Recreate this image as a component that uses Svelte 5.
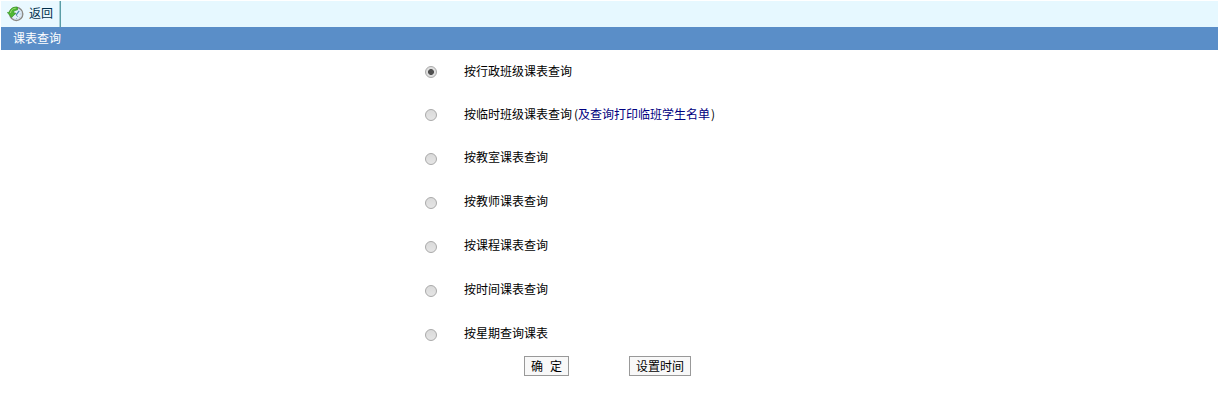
<script>
  const options = [
    { id: 'class', label: '按行政班级课表查询' },
    { id: 'temp', label: '按临时班级课表查询', link: '及查询打印临班学生名单' },
    { id: 'room', label: '按教室课表查询' },
    { id: 'teacher', label: '按教师课表查询' },
    { id: 'course', label: '按课程课表查询' },
    { id: 'time', label: '按时间课表查询' },
    { id: 'week', label: '按星期查询课表' }
  ];
  let selected = $state('class');
</script>

<div class="page">
  <div class="toolbar">
    <button class="back" type="button">
      <svg width="17" height="16" viewBox="0 0 17 16" aria-hidden="true">
        <circle cx="9.3" cy="8" r="6.5" fill="#e2effa" stroke="#8b8984" stroke-width="1.4" />
        <circle cx="9.3" cy="8" r="5.4" fill="none" stroke="#c5d6e5" stroke-width=".7" />
        <path d="M9.5 12v1M13.7 8h-1M12.5 11.5l-.6-.6" stroke="#8ca4b8" stroke-width=".7" />
        <path d="M9 9.2l3.2-4.4" stroke="#4a88ac" stroke-width="1.2" />
        <path d="M9 9.2l2 1.5" stroke="#729ab5" stroke-width=".9" />
        <path d="M10.5 1.2C6.2.6 3 2.8 2.3 6.2L.4 6.5l4.2 5 4.3-4.3-2.4-.5c.3-1.9 1.8-2.8 4-2.8z" fill="#4eb832" stroke="#369326" stroke-width=".7" />
        <path d="M8.8 2.2C5.8 2.2 3.9 4 3.4 7" fill="none" stroke="#a4dd7e" stroke-width=".9" />
      </svg>
      <span>返回</span>
    </button>
  </div>
  <div class="title">课表查询</div>

  <form class="content" onsubmit={(event) => event.preventDefault()}>
    {#each options as option}
      <div class="option">
        <input id={option.id} type="radio" name="query" value={option.id} bind:group={selected} />
        <label for={option.id}>{option.label}{#if option.link}<span class="paren open">(</span><span class="link">{option.link}</span><span class="paren close">)</span>{/if}</label>
      </div>
    {/each}
    <div class="actions">
      <button class="confirm" type="submit"><span>确</span><span>定</span></button>
      <button class="schedule" type="button">设置时间</button>
    </div>
  </form>
</div>

<style>
  .page {
    box-sizing: border-box;
    height: 405px;
    padding: 1px 0 0 1px;
    background: #fff;
    color: #000;
    font: 12px/16px "Noto Sans CJK SC", sans-serif;
  }
  .toolbar {
    display: flex;
    height: 26px;
    background: #e6f8ff;
  }
  .back {
    display: flex;
    align-items: center;
    box-sizing: border-box;
    width: 60px;
    padding: 0 0 1px 6px;
    gap: 5px;
    border: 0;
    border-right: 1px solid #5b9da6;
    background: #e9f8ff;
    box-shadow: inset -1px 0 #a8cfd5;
    color: #002f4b;
    font: inherit;
  }
  .back span {
    padding-bottom: 1px;
  }
  .title {
    height: 23px;
    padding-left: 12px;
    background: #5a8ec8;
    color: #fff;
    line-height: 22px;
  }
  .content {
    padding-left: 424px;
  }
  .option {
    display: flex;
    align-items: center;
    height: 44px;
    gap: 27px;
  }
  .option:first-child {
    height: 43px;
  }
  input {
    appearance: none;
    box-sizing: border-box;
    width: 12px;
    height: 12px;
    margin: 0;
    border: 1px solid #a9a9a9;
    border-radius: 50%;
    background: linear-gradient(#dadada, #e5e5e5);
  }
  input:checked {
    background: radial-gradient(circle, #505050 0 2.6px, #dedede 3.3px);
  }
  label {
    display: flex;
    padding-bottom: 2px;
    white-space: nowrap;
  }
  .option:nth-child(n + 3) label {
    padding-bottom: 4px;
  }
  .link {
    color: #000080;
  }
  .paren {
    width: 6px;
  }
  .open {
    text-align: right;
  }
  .close {
    padding-left: 1px;
  }
  .actions {
    display: flex;
    gap: 60px;
    margin-top: -1px;
    padding-left: 99px;
  }
  .actions button {
    display: flex;
    align-items: center;
    justify-content: center;
    box-sizing: border-box;
    height: 20px;
    padding: 0 0 1px;
    border: 1px solid #999;
    background: #f8f8f8;
    color: #000;
    font: inherit;
  }
  .actions .confirm {
    width: 45px;
    gap: 7px;
  }
  .actions .schedule {
    width: 62px;
  }
</style>
